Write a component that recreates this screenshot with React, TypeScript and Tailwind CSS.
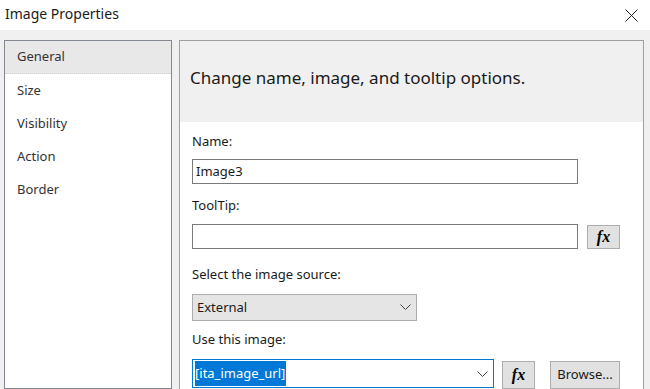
import React from "react";

const ui = { fontFamily: '"Segoe UI", "Noto Sans", "Open Sans", sans-serif' };

function Chevron() {
  return (
    <svg width="11" height="7" viewBox="0 0 11 7" className="shrink-0">
      <polyline points="0.5,0.5 5.5,5.5 10.5,0.5" fill="none" stroke="#444" strokeWidth="1" />
    </svg>
  );
}

function Fx({ h }: { h: string }) {
  return (
    <div
      className={`flex items-center justify-center bg-[#e1e1e1] border border-[#adadad] w-[33px] ${h} text-[16px] font-bold italic text-black`}
      style={{ fontFamily: '"Liberation Serif", serif' }}
    >
      fx
    </div>
  );
}

const navItems = ["General", "Size", "Visibility", "Action", "Border"];

export default function App() {
  return (
    <div className="w-[650px] h-[389px] bg-[#f0f0f0] overflow-hidden flex flex-col text-[#1a1a1a]" style={ui}>
      <div className="h-[30px] shrink-0 bg-white flex items-center justify-between pl-[5px] pr-[12px]">
        <span className="text-[14px] leading-none pb-[3px]">Image Properties</span>
        <svg width="13" height="13" viewBox="0 0 13 13">
          <path d="M0.5 0.5 L12.5 12.5 M12.5 0.5 L0.5 12.5" stroke="#222" strokeWidth="1" />
        </svg>
      </div>

      <div className="flex flex-1 pt-[10px] pl-[4px] pr-[6px] gap-[7px] min-h-0">
        <div className="w-[168px] shrink-0 border border-[#828790] bg-white text-[#333]">
          {navItems.map((item, i) => (
            <div
              key={item}
              className={`h-[33px] flex items-center pl-[12px] text-[13px] ${
                i === 0 ? "bg-[#e8e8e8] border-b border-dotted border-[#d0d0d0]" : ""
              }`}
            >
              {item}
            </div>
          ))}
        </div>

        <div className="flex-1 border border-[#a0a0a0] border-b-0 bg-white flex flex-col">
          <div className="h-[81px] shrink-0 bg-[#f0f0f0] flex items-center pl-[10px] text-[17px] pb-[8px]">
            Change name, image, and tooltip options.
          </div>

          <div className="pl-[12px] pt-[11px] flex flex-col text-[13px]">
            <div className="h-[18px] flex items-center">Name:</div>
            <div className="mt-[8px] w-[386px] h-[25px] border border-[#7a7a7a] flex items-center pl-[3px]">Image3</div>

            <div className="mt-[13px] h-[18px] flex items-center">ToolTip:</div>
            <div className="mt-[9px] flex items-start gap-[9px]">
              <div className="w-[386px] h-[25px] border border-[#7a7a7a]" />
              <div className="mt-[1px]">
                <Fx h="h-[24px]" />
              </div>
            </div>

            <div className="mt-[17px] h-[18px] flex items-center">Select the image source:</div>
            <div className="mt-[10px] w-[225px] h-[27px] bg-[#e5e5e5] border border-[#adadad] flex items-center justify-between pl-[4px] pr-[5px]">
              <span>External</span>
              <Chevron />
            </div>

            <div className="mt-[10px] h-[18px] flex items-center">Use this image:</div>
            <div className="mt-[10px] flex items-start">
              <div className="w-[302px] h-[29px] border border-[#0078d7] flex items-start pt-[1px] pl-[2px] pr-[5px]">
                <span className="bg-[#0078d7] text-white h-[25px] flex items-center pr-[1px]">[ita_image_url]</span>
                <div className="flex-1" />
                <div className="pt-[10px]">
                  <Chevron />
                </div>
              </div>
              <div className="ml-[8px] mt-[2px]">
                <Fx h="h-[28px]" />
              </div>
              <div className="ml-[15px] mt-[2px] w-[70px] h-[28px] bg-[#e1e1e1] border border-[#adadad] flex items-center justify-center">
                Browse...
              </div>
            </div>
          </div>
        </div>
      </div>
    </div>
  );
}
